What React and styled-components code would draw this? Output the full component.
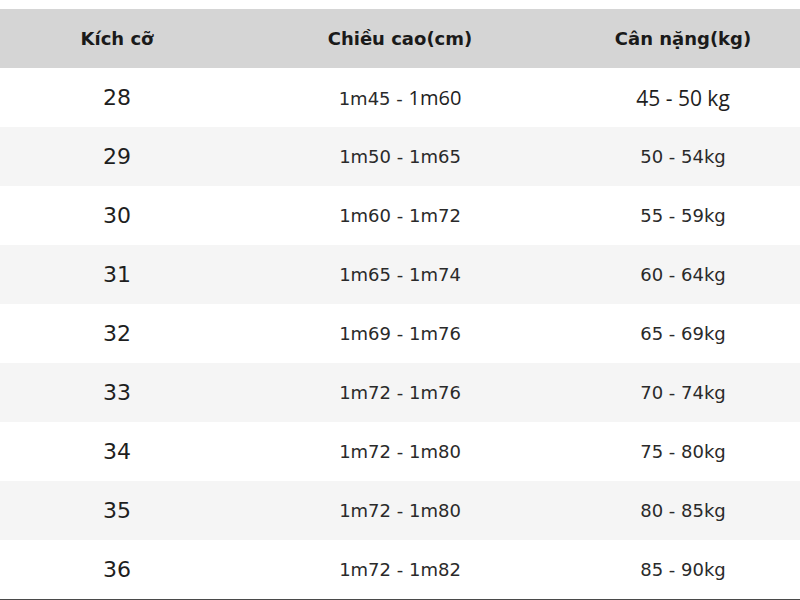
import React from "react";
import styled, { createGlobalStyle } from "styled-components";

const Global = createGlobalStyle`
  html, body { margin: 0; padding: 0; background: #ffffff; }
  body { font-family: "DejaVu Sans", sans-serif; color: #1e1e1e; }
`;

const Page = styled.div`
  width: 800px;
  height: 600px;
  padding-top: 9px;
  box-sizing: border-box;
  overflow: hidden;
  background: #ffffff;
`;

const Table = styled.div`
  display: flex;
  flex-direction: column;
  border-bottom: 2px solid #4a4a4a;
`;

const Row = styled.div`
  display: grid;
  grid-template-columns: 234px 332px 234px;
  height: ${(p) => p.$h}px;
  align-items: center;
  background: ${(p) => p.$bg};
`;

const HeadCell = styled.div`
  text-align: center;
  font-family: "DejaVu Sans", sans-serif;
  font-weight: bold;
  font-size: 18px;
  color: #1a1a1a;
`;

const SizeCell = styled.div`
  text-align: center;
  font-size: 22px;
  color: #1e1e1e;
`;

const ValueCell = styled.div`
  text-align: center;
  font-size: 18px;
  color: #2a2a2a;
`;

const Alt = styled.span`
  font-family: "Open Sans", sans-serif;
  font-size: ${(p) => p.$size || 20}px;
  color: #1e1e1e;
`;

const rows = [
  ["28", "1m45 - 1m60", "45 - 50kg"],
  ["29", "1m50 - 1m65", "50 - 54kg"],
  ["30", "1m60 - 1m72", "55 - 59kg"],
  ["31", "1m65 - 1m74", "60 - 64kg"],
  ["32", "1m69 - 1m76", "65 - 69kg"],
  ["33", "1m72 - 1m76", "70 - 74kg"],
  ["34", "1m72 - 1m80", "75 - 80kg"],
  ["35", "1m72 - 1m80", "80 - 85kg"],
  ["36", "1m72 - 1m82", "85 - 90kg"],
];

export default function App() {
  return (
    <>
      <Global />
      <Page>
        <Table>
          <Row $h={59} $bg="#d5d5d5">
            <HeadCell>Kích cỡ</HeadCell>
            <HeadCell>Chiều cao(cm)</HeadCell>
            <HeadCell>Cân nặng(kg)</HeadCell>
          </Row>
          {rows.map((r, i) => (
            <Row key={r[0]} $h={i === 0 ? 59 : 59} $bg={i % 2 === 0 ? "#ffffff" : "#f5f5f5"}>
              <SizeCell>{r[0]}</SizeCell>
              {i === 0 ? (
                <>
                  <ValueCell>
                    1m45 - <Alt $size={20}>1m60</Alt>
                  </ValueCell>
                  <ValueCell>
                    <Alt $size={21}>45 - 50&nbsp;kg</Alt>
                  </ValueCell>
                </>
              ) : (
                <>
                  <ValueCell>{r[1]}</ValueCell>
                  <ValueCell>{r[2]}</ValueCell>
                </>
              )}
            </Row>
          ))}
        </Table>
      </Page>
    </>
  );
}
